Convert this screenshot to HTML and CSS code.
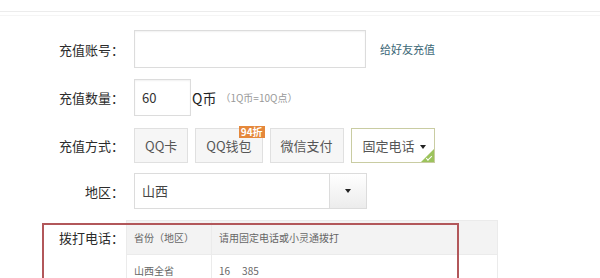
FILE: index.html
```html
<!DOCTYPE html>
<html lang="zh-CN">
<head>
    <meta charset="UTF-8">
    <meta name="viewport" content="width=device-width, initial-scale=1.0">
    <title>Q币充值</title>
    <link rel="stylesheet" href="styles.css">
</head>
<body>
    <div class="topline"></div>
    <form class="recharge">
        <div class="row row-account">
            <label class="label">充值账号<span class="colon">：</span></label>
            <input class="field field-account" type="text">
            <a class="friend">给好友充值</a>
        </div>
        <div class="row row-amount">
            <label class="label">充值数量<span class="colon">：</span></label>
            <input class="field field-amount" type="text" value="60">
            <span class="unit">Q币</span>
            <span class="note">（1Q币=10Q点）</span>
        </div>
        <div class="row row-method">
            <label class="label">充值方式<span class="colon">：</span></label>
            <div class="methods">
                <span class="method">QQ卡</span>
                <span class="method">QQ钱包<em class="badge">94折</em></span>
                <span class="method">微信支付</span>
                <span class="method method-active">固定电话<i class="caret"></i></span>
            </div>
        </div>
        <div class="row row-region">
            <label class="label">地区<span class="colon">：</span></label>
            <div class="select">
                <span class="select-value">山西</span>
                <span class="select-btn"><i class="caret"></i></span>
            </div>
        </div>
        <div class="row row-phone">
            <label class="label">拨打电话<span class="colon">：</span></label>
            <table class="phones">
                <tr>
                    <th class="col-area">省份（地区）</th>
                    <th>请用固定电话或小灵通拨打</th>
                </tr>
                <tr>
                    <td class="col-area">山西全省</td>
                    <td>16<span class="num-gap"></span>385</td>
                </tr>
            </table>
            <div class="mark"></div>
        </div>
    </form>
</body>
</html>
```

FILE: styles.css
```css
body {
    margin: 0;
    background-color: #fff;
    font-family: "Noto Sans CJK SC", "Liberation Sans", sans-serif;
    color: #333;
}
.topline {
    margin-top: 11px;
    height: 3px;
    border-top: 1px solid #ececec;
    border-bottom: 1px solid #f5f5f5;
}
.recharge {
    padding-top: 14px;
}
.row {
    display: flex;
    align-items: center;
}
.label {
    width: 124px;
    margin-right: 10px;
    text-align: right;
    font-size: 13px;
    color: #2b2b2b;
    flex-shrink: 0;
}
/* centred full-width colon, like the YaHei original */
.colon {
    font-family: "Noto Sans CJK JP", sans-serif;
}
.field {
    box-sizing: border-box;
    border: 1px solid #dcdcdc;
    box-shadow: inset 0 1px 2px rgba(0, 0, 0, 0.06);
    font-family: inherit;
    font-size: 13px;
    color: #333;
    padding: 0 7px;
    outline: none;
}
.row-account {
    height: 38px;
    margin-bottom: 11px;
}
.field-account {
    width: 232px;
    height: 38px;
}
.friend {
    margin-left: 14px;
    font-size: 11px;
    color: #3b6776;
}
.row-amount {
    height: 37px;
    margin-bottom: 12px;
}
.field-amount {
    width: 57px;
    height: 37px;
}
.unit {
    margin-left: 1px;
    font-size: 14px;
    color: #222;
}
.note {
    margin-left: 4px;
    font-size: 10px;
    color: #999;
}
.row-method {
    height: 35px;
    margin-bottom: 10px;
}
.methods {
    display: flex;
    gap: 7px;
}
.method {
    position: relative;
    box-sizing: border-box;
    height: 35px;
    line-height: 33px;
    padding: 0 10px;
    border: 1px solid #e0e0e0;
    background-color: #f6f6f6;
    font-size: 13px;
    color: #555;
}
.method-active {
    padding: 0 8px 0 11px;
    border-color: #c9cca2;
    background-color: #fff;
}
.method-active::before {
    content: "";
    position: absolute;
    right: 0;
    bottom: 0;
    border-style: solid;
    border-width: 0 0 13px 13px;
    border-color: transparent transparent #9cc35c transparent;
}
.method-active::after {
    content: "";
    position: absolute;
    right: 2px;
    bottom: 3px;
    width: 5px;
    height: 2px;
    border-left: 1px solid #fff;
    border-bottom: 1px solid #fff;
    transform: rotate(-45deg);
}
.caret {
    display: inline-block;
    margin-left: 5px;
    vertical-align: middle;
    border-style: solid;
    border-width: 4px 3px 0 3px;
    border-color: #222 transparent transparent transparent;
}
.badge {
    position: absolute;
    top: -3px;
    right: -3px;
    padding: 0 2px;
    height: 12px;
    line-height: 12px;
    background-color: #e5883b;
    color: #fff;
    font-style: normal;
    font-size: 10px;
    font-weight: bold;
}
.row-region {
    height: 36px;
    margin-bottom: 11px;
}
.select {
    display: flex;
    box-sizing: border-box;
    width: 233px;
    height: 36px;
    border: 1px solid #dcdcdc;
}
.select-value {
    flex: 1;
    line-height: 34px;
    padding-left: 7px;
    font-size: 13px;
    color: #444;
}
.select-btn {
    width: 36px;
    border-left: 1px solid #dcdcdc;
    background: linear-gradient(#fff, #ececec);
    display: flex;
    align-items: center;
    justify-content: center;
}
.select-btn .caret {
    margin-left: 0;
}
.row-phone {
    position: relative;
    align-items: flex-start;
}
.row-phone .label {
    margin-right: 2px;
    padding-top: 8px;
}
.phones {
    width: 372px;
    border-collapse: collapse;
    font-size: 10px;
    color: #666;
}
.phones th,
.phones td {
    text-align: left;
    font-weight: normal;
    padding: 0 7px;
    border: 1px solid #ebebeb;
}
.phones th {
    height: 33px;
    background-color: #f3f3f3;
}
.phones td {
    height: 30px;
}
.col-area {
    width: 70px;
}
.num-gap {
    display: inline-block;
    width: 12px;
}
.mark {
    position: absolute;
    left: 42px;
    top: 3px;
    width: 413px;
    height: 90px;
    border: 2px solid #b2575a;
}
```
